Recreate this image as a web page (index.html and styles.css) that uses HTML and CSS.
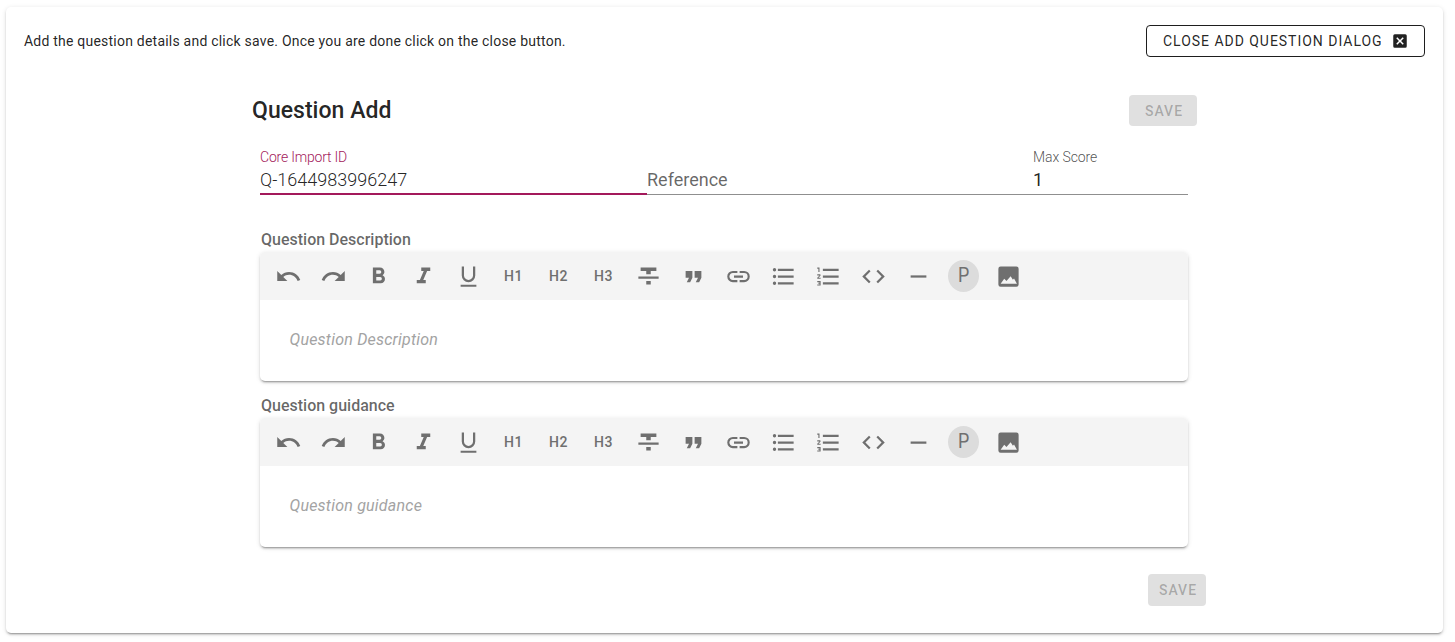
FILE: index.html
```
<!DOCTYPE html>
<html lang="en">
<head>
<meta charset="utf-8">
<title>Question Add</title>
<link rel="stylesheet" href="styles.css">
</head>
<body>
<svg class="defs" aria-hidden="true">
  <symbol id="undo" viewBox="0 0 24 24"><path d="M12.5 8C9.85 8 7.45 9 5.6 10.6L2 7v9h9l-3.62-3.62C8.77 11.22 10.54 10.5 12.5 10.5c3.54 0 6.55 2.31 7.6 5.5l2.37-.78C21.08 11.03 17.15 8 12.5 8z"/></symbol>
  <symbol id="redo" viewBox="0 0 24 24"><path d="M18.4 10.6C16.55 9 14.15 8 11.5 8c-4.65 0-8.58 3.03-9.96 7.22L3.9 16c1.05-3.19 4.05-5.5 7.6-5.5 1.95 0 3.73.72 5.12 1.88L13 16h9V7l-3.6 3.6z"/></symbol>
  <symbol id="bold" viewBox="0 0 24 24"><path d="M13.5 15.5H10v-3h3.5a1.5 1.5 0 0 1 0 3M10 6.5h3a1.5 1.5 0 0 1 0 3h-3m5.6 1.29c.97-.68 1.65-1.79 1.65-2.79C17.25 5.74 15.5 4 13.25 4H7v14h7.04c2.1 0 3.71-1.7 3.71-3.79 0-1.52-.86-2.82-2.15-3.42z"/></symbol>
  <symbol id="italic" viewBox="0 0 24 24"><path d="M10 4v3h2.21l-3.42 8H6v3h8v-3h-2.21l3.42-8H18V4h-8z"/></symbol>
  <symbol id="underline" viewBox="0 0 24 24"><path d="M5 21h14v-1.7H5V21m7-4a6 6 0 0 0 6-6V3h-2v8a4 4 0 0 1-8 0V3H6v8a6 6 0 0 0 6 6z"/></symbol>
  <symbol id="strike" viewBox="0 0 24 24"><path d="M3 14h18v-2H3m2-8v3h5v3h4V7h5V4m-9 15h4v-3h-4v3z"/></symbol>
  <symbol id="quote" viewBox="0 0 24 24"><path d="M14 17h3l2-4V7h-6v6h3M6 17h3l2-4V7H5v6h3l-2 4z"/></symbol>
  <symbol id="link" viewBox="0 0 24 24"><path d="M3.9 12c0-1.71 1.39-3.1 3.1-3.1h4V7H7a5 5 0 0 0 0 10h4v-1.9H7c-1.71 0-3.1-1.39-3.1-3.1M8 13h8v-2H8v2m9-6h-4v1.9h4a3.1 3.1 0 0 1 0 6.2h-4V17h4a5 5 0 0 0 0-10z"/></symbol>
  <symbol id="bullets" viewBox="0 0 24 24"><path d="M7 5h14v2H7V5m0 8v-2h14v2H7M4 4.5a1.5 1.5 0 1 1 0 3 1.5 1.5 0 0 1 0-3m0 6a1.5 1.5 0 1 1 0 3 1.5 1.5 0 0 1 0-3M7 19v-2h14v2H7m-3-2.5a1.5 1.5 0 1 1 0 3 1.5 1.5 0 0 1 0-3z"/></symbol>
  <symbol id="numbers" viewBox="0 0 24 24"><path d="M7 13v-2h14v2H7m0 6v-2h14v2H7M7 7V5h14v2H7M3 8V5H2V4h2v4H3m-1 9v-1h3v4H2v-1h2v-.5H3v-1h1V17H2m2.25-7a.75.75 0 0 1 .75.75c0 .2-.08.39-.21.52L3.12 13H5v1H2v-.92L4 11H2v-1h2.25z"/></symbol>
  <symbol id="code" viewBox="0 0 24 24"><path d="M14.6 16.6l4.6-4.6-4.6-4.6L16 6l6 6-6 6-1.4-1.4m-5.2 0L4.8 12l4.6-4.6L8 6l-6 6 6 6 1.4-1.4z"/></symbol>
  <symbol id="rule" viewBox="0 0 24 24"><path d="M5 11h14v2H5z"/></symbol>
  <symbol id="image" viewBox="0 0 24 24"><path d="M21 19V5a2 2 0 0 0-2-2H5a2 2 0 0 0-2 2v14a2 2 0 0 0 2 2h14a2 2 0 0 0 2-2M5 18.5l3.2-4.6 2 2.2 3.7-4.3 2 3 1-1.1 2.6 4.8z"/></symbol>
  <symbol id="close-box" viewBox="0 0 24 24"><path d="M19 3H5a2 2 0 0 0-2 2v14a2 2 0 0 0 2 2h14a2 2 0 0 0 2-2V5a2 2 0 0 0-2-2m-3.4 14L12 13.4 8.4 17 7 15.6l3.6-3.6L7 8.4 8.4 7l3.6 3.6L15.6 7 17 8.4 13.4 12l3.6 3.6-1.4 1.4z"/></symbol>
</svg>
<main class="dialog">
  <header class="intro">
    <p class="hint">Add the question details and click save. Once you are done click on the close button.</p>
    <button class="close">Close Add Question Dialog<svg class="close-icon"><use href="#close-box"/></svg></button>
  </header>
  <section class="form">
    <div class="heading"><h1 class="title">Question Add</h1><button class="save" disabled>Save</button></div>
    <div class="fields">
      <label class="field focused"><span class="label">Core Import ID</span><span class="value">Q-1644983996247</span></label>
      <label class="field"><span class="label"></span><span class="value placeholder">Reference</span></label>
      <label class="field"><span class="label">Max Score</span><span class="value">1</span></label>
    </div>
    <h2 class="caption">Question Description</h2>
    <div class="editor">
      <div class="toolbar">
        <span class="tool"><svg class="icon"><use href="#undo"/></svg></span>
        <span class="tool"><svg class="icon"><use href="#redo"/></svg></span>
        <span class="tool"><svg class="icon"><use href="#bold"/></svg></span>
        <span class="tool"><svg class="icon"><use href="#italic"/></svg></span>
        <span class="tool"><svg class="icon"><use href="#underline"/></svg></span>
        <span class="tool">H1</span><span class="tool">H2</span><span class="tool">H3</span>
        <span class="tool"><svg class="icon"><use href="#strike"/></svg></span>
        <span class="tool"><svg class="icon"><use href="#quote"/></svg></span>
        <span class="tool"><svg class="icon"><use href="#link"/></svg></span>
        <span class="tool"><svg class="icon"><use href="#bullets"/></svg></span>
        <span class="tool"><svg class="icon"><use href="#numbers"/></svg></span>
        <span class="tool"><svg class="icon"><use href="#code"/></svg></span>
        <span class="tool"><svg class="icon"><use href="#rule"/></svg></span>
        <span class="tool"><span class="paragraph"><span class="letter">P</span></span></span>
        <span class="tool"><svg class="icon"><use href="#image"/></svg></span>
      </div>
      <p class="content">Question Description</p>
    </div>
    <h2 class="caption second">Question guidance</h2>
    <div class="editor">
      <div class="toolbar">
        <span class="tool"><svg class="icon"><use href="#undo"/></svg></span>
        <span class="tool"><svg class="icon"><use href="#redo"/></svg></span>
        <span class="tool"><svg class="icon"><use href="#bold"/></svg></span>
        <span class="tool"><svg class="icon"><use href="#italic"/></svg></span>
        <span class="tool"><svg class="icon"><use href="#underline"/></svg></span>
        <span class="tool">H1</span><span class="tool">H2</span><span class="tool">H3</span>
        <span class="tool"><svg class="icon"><use href="#strike"/></svg></span>
        <span class="tool"><svg class="icon"><use href="#quote"/></svg></span>
        <span class="tool"><svg class="icon"><use href="#link"/></svg></span>
        <span class="tool"><svg class="icon"><use href="#bullets"/></svg></span>
        <span class="tool"><svg class="icon"><use href="#numbers"/></svg></span>
        <span class="tool"><svg class="icon"><use href="#code"/></svg></span>
        <span class="tool"><svg class="icon"><use href="#rule"/></svg></span>
        <span class="tool"><span class="paragraph"><span class="letter">P</span></span></span>
        <span class="tool"><svg class="icon"><use href="#image"/></svg></span>
      </div>
      <p class="content">Question guidance</p>
    </div>
    <footer class="actions"><button class="save compact" disabled>Save</button></footer>
  </section>
</main>
</body>
</html>
```

FILE: styles.css
```
* { box-sizing: border-box; }
body { margin: 0; padding: 7px 12px 9px 6px; background: #fff; font-family: Roboto, sans-serif; color: rgba(0,0,0,.87); }
.defs { display: none; }
h1, h2, p { margin: 0; }
button { font-family: inherit; text-transform: uppercase; border-radius: 4px; }
.dialog, .editor { background: #fff; border-radius: 5px; box-shadow: 0 3px 1px -2px rgba(0,0,0,.2), 0 2px 2px 0 rgba(0,0,0,.14), 0 1px 5px 0 rgba(0,0,0,.12); }
.dialog { height: 626px; padding: 18px 18px 0; }
.intro { display: flex; justify-content: space-between; height: 32px; }
.hint { font-size: 14px; line-height: 32px; letter-spacing: .22px; }
.close { display: flex; align-items: center; width: 279px; height: 32px; padding: 0 16px; border: 1px solid #1e1e1e; background: #fff; color: rgba(0,0,0,.87); font-size: 14px; font-weight: 450; letter-spacing: .97px; white-space: nowrap; }
.close-icon { width: 18px; height: 18px; margin-left: 8px; fill: currentColor; flex: none; }
.form { width: 946px; margin: 38px 0 0 227px; }
.heading { display: flex; justify-content: space-between; height: 31px; }
.title { padding-left: 1px; font-size: 23px; font-weight: 500; line-height: 31px; letter-spacing: .03px; }
.save { width: 68px; height: 31px; padding: 0 0 0 2px; border: 0; background: #e0e0e0; color: rgba(0,0,0,.26); font-size: 14px; font-weight: 500; letter-spacing: 1px; }
.fields { display: grid; grid-template-columns: 387px 386px 155px; width: 928px; height: 46px; margin: 23px 0 0 9px; }
.field { display: flex; flex-direction: column; border-bottom: 1px solid #8f8f8f; }
.focused { border-bottom: 2px solid #a3195b; font-weight: 300; }
.label { height: 16px; font-size: 14px; line-height: 16px; color: rgba(0,0,0,.7); font-weight: 300; letter-spacing: -.1px; }
.focused .label { color: #a3195b; letter-spacing: -.2px; }
.value { margin-top: 4px; font-size: 18px; line-height: 22px; }
.placeholder { color: rgba(0,0,0,.6); }
.caption { margin: 33px 0 0 10px; font-size: 16px; line-height: 24px; font-weight: 500; color: rgba(0,0,0,.6); height: 24px; }
.second { margin-top: 13px; }
.editor { width: 928px; height: 129px; margin-left: 9px; overflow: hidden; }
.toolbar { display: grid; grid-template-columns: repeat(17, 45px); align-items: center; height: 48px; padding-left: 6px; background: #f4f4f4; color: #6f6f6f; }
.tool { display: flex; align-items: center; justify-content: center; height: 48px; font-size: 14px; font-weight: 500; letter-spacing: .6px; }
.icon { width: 27px; height: 27px; fill: currentColor; }
.paragraph { width: 31px; height: 32px; border-radius: 50%; background: #dcdcdc; font-size: 21px; line-height: 31px; text-align: center; font-weight: 400; letter-spacing: 0; }
.letter { display: inline-block; transform: scaleX(.85); }
.content { padding: 28px 29.5px; font-size: 16px; line-height: 24px; font-style: italic; letter-spacing: .22px; color: #a3a3a3; }
.actions { display: flex; justify-content: flex-end; margin: 27px -9px 0 0; }
.compact { width: 58px; height: 32px; }
```
